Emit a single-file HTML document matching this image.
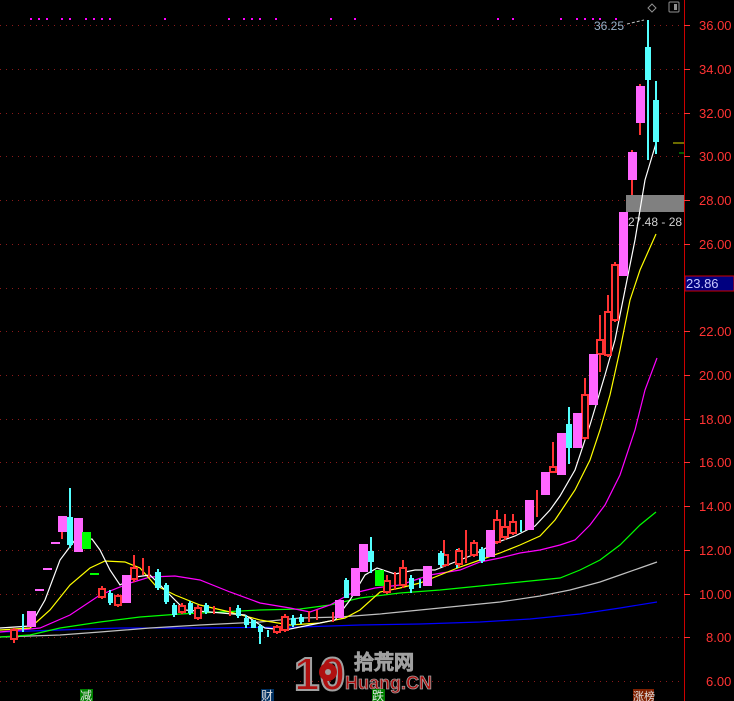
<!DOCTYPE html>
<html><head><meta charset="utf-8"><style>
html,body{margin:0;padding:0;background:#000;width:734px;height:701px;overflow:hidden}
svg{display:block}
text{font-family:"Liberation Sans","Noto Sans CJK SC",sans-serif}
</style></head><body>
<svg width="734" height="701" viewBox="0 0 734 701" xmlns="http://www.w3.org/2000/svg">
<rect width="734" height="701" fill="#000"/>
<g stroke="#8b1a1a" stroke-width="1" stroke-dasharray="1,5">
<line x1="0" y1="25.5" x2="684" y2="25.5"/><line x1="0" y1="69.5" x2="684" y2="69.5"/>
<line x1="0" y1="113.5" x2="684" y2="113.5"/><line x1="0" y1="156.5" x2="684" y2="156.5"/>
<line x1="0" y1="200.5" x2="684" y2="200.5"/><line x1="0" y1="244.5" x2="684" y2="244.5"/>
<line x1="0" y1="288.5" x2="684" y2="288.5"/><line x1="0" y1="331.5" x2="684" y2="331.5"/>
<line x1="0" y1="375.5" x2="684" y2="375.5"/><line x1="0" y1="419.5" x2="684" y2="419.5"/>
<line x1="0" y1="462.5" x2="684" y2="462.5"/><line x1="0" y1="506.5" x2="684" y2="506.5"/>
<line x1="0" y1="550.5" x2="684" y2="550.5"/><line x1="0" y1="594.5" x2="684" y2="594.5"/>
<line x1="0" y1="637.5" x2="684" y2="637.5"/><line x1="0" y1="681.5" x2="684" y2="681.5"/>
</g>
<line x1="684.5" y1="0" x2="684.5" y2="701" stroke="#cc0000" stroke-width="1"/>
<g fill="#ff3333" font-size="13">
<text x="699" y="30">36.00</text><text x="699" y="74">34.00</text><text x="699" y="118">32.00</text>
<text x="699" y="161">30.00</text><text x="699" y="205">28.00</text><text x="699" y="249">26.00</text>
<text x="699" y="336">22.00</text><text x="699" y="380">20.00</text><text x="699" y="424">18.00</text>
<text x="699" y="467">16.00</text><text x="699" y="511">14.00</text><text x="699" y="555">12.00</text>
<text x="699" y="599">10.00</text><text x="706" y="642">8.00</text><text x="706" y="686">6.00</text>
</g>
<g stroke="#ff3333" stroke-width="1"><line x1="684" y1="25.5" x2="690" y2="25.5"/><line x1="684" y1="69.5" x2="690" y2="69.5"/><line x1="684" y1="113.5" x2="690" y2="113.5"/><line x1="684" y1="156.5" x2="690" y2="156.5"/><line x1="684" y1="200.5" x2="690" y2="200.5"/><line x1="684" y1="244.5" x2="690" y2="244.5"/><line x1="684" y1="331.5" x2="690" y2="331.5"/><line x1="684" y1="375.5" x2="690" y2="375.5"/><line x1="684" y1="419.5" x2="690" y2="419.5"/><line x1="684" y1="462.5" x2="690" y2="462.5"/><line x1="684" y1="506.5" x2="690" y2="506.5"/><line x1="684" y1="550.5" x2="690" y2="550.5"/><line x1="684" y1="594.5" x2="690" y2="594.5"/><line x1="684" y1="637.5" x2="690" y2="637.5"/></g>
<rect x="685" y="276" width="49" height="15" fill="#000080" stroke="#cc0000"/>
<text x="686" y="288" fill="#c8c8ff" font-size="13">23.86</text>
<rect x="626" y="195" width="58" height="17" fill="#808080"/>
<text x="628" y="226" fill="#d0d0d0" font-size="12">27.48 - 28</text>
<text x="594" y="30" fill="#9ab0c8" font-size="12">36.25</text>
<line x1="627" y1="24" x2="644" y2="20" stroke="#c0c0c0" stroke-dasharray="3,2"/>
<line x1="673" y1="143" x2="684" y2="143" stroke="#d8d800"/>
<line x1="679" y1="153" x2="684" y2="153" stroke="#00c000"/>
<path d="M652 4l4 4-4 4-4-4z" fill="none" stroke="#909090"/>
<rect x="669" y="2" width="10" height="10" rx="1" fill="none" stroke="#909090"/><rect x="674" y="4" width="3" height="6" fill="#909090"/>
<g fill="#ff00ff">
<rect x="30" y="18" width="2" height="2"/><rect x="38" y="18" width="2" height="2"/><rect x="46" y="18" width="2" height="2"/><rect x="61" y="18" width="2" height="2"/><rect x="69" y="18" width="2" height="2"/><rect x="85" y="18" width="2" height="2"/><rect x="93" y="18" width="2" height="2"/><rect x="101" y="18" width="2" height="2"/><rect x="109" y="18" width="2" height="2"/><rect x="164" y="18" width="2" height="2"/><rect x="228" y="18" width="2" height="2"/><rect x="243" y="18" width="2" height="2"/><rect x="251" y="18" width="2" height="2"/><rect x="259" y="18" width="2" height="2"/><rect x="275" y="18" width="2" height="2"/><rect x="330" y="18" width="2" height="2"/><rect x="354" y="18" width="2" height="2"/><rect x="497" y="18" width="2" height="2"/><rect x="512" y="18" width="2" height="2"/><rect x="560" y="18" width="2" height="2"/><rect x="576" y="18" width="2" height="2"/><rect x="584" y="18" width="2" height="2"/><rect x="592" y="18" width="2" height="2"/><rect x="599" y="18" width="2" height="2"/><rect x="615" y="18" width="2" height="2"/>
</g>
<g fill="none" stroke-width="1.2">
<polyline stroke="#0000ff" points="0,632 60,630 120,628 200,628 300,627 360,625 420,624 480,622 530,619 580,614 620,608 657,602"/>
<polyline stroke="#c0c0c0" points="0,637 60,635 100,632 150,628 200,625 260,622 300,618 340,617 380,614 420,610 460,606 500,602 540,596 570,590 600,582 620,575 640,568 657,562"/>
<polyline stroke="#00ff00" points="0,637 30,635 60,628 100,622 140,617 180,614 220,612 260,610 300,609 330,605 360,598 400,593 440,590 480,586 510,583 540,580 560,578 580,570 600,560 620,545 640,525 656,512"/>
<polyline stroke="#ff00ff" points="0,632 40,628 70,615 100,595 130,583 150,577 175,576 200,580 230,592 260,603 290,608 310,612 330,605 350,594 375,588 400,585 430,575 460,570 480,562 500,558 520,553 540,550 560,545 575,540 590,525 605,505 620,475 635,430 645,390 657,358"/>
<polyline stroke="#ffff00" points="0,630 30,628 50,610 70,585 90,568 105,561 125,562 140,568 155,585 175,595 200,605 230,612 260,620 290,625 320,623 345,618 360,610 380,592 400,588 420,583 440,575 460,567 480,560 500,553 520,545 540,536 555,520 565,505 575,490 590,460 600,430 610,395 620,350 630,300 640,270 656,234"/>
<polyline stroke="#ffffff" points="0,628 30,626 45,600 60,560 75,540 92,539 100,550 110,570 120,585 135,577 150,575 165,590 185,610 210,612 245,615 265,628 285,630 310,625 335,620 350,600 365,575 377,568 395,574 415,570 435,570 455,562 475,554 495,543 515,536 535,526 550,510 560,496 575,470 590,425 605,375 615,340 625,290 635,240 645,180 657,140"/>
</g>
<g stroke-width="2">
<g stroke="#ff3333">
<line x1="14" y1="628" x2="14" y2="643"/><line x1="62" y1="516" x2="62" y2="539"/><line x1="102" y1="586" x2="102" y2="599"/><line x1="118" y1="594" x2="118" y2="607"/><line x1="134" y1="555" x2="134" y2="582"/><line x1="143" y1="558" x2="143" y2="575"/><line x1="149" y1="566" x2="149" y2="577"/><line x1="182" y1="603" x2="182" y2="614"/><line x1="198" y1="605" x2="198" y2="620"/><line x1="214" y1="606" x2="214" y2="614"/><line x1="230" y1="607" x2="230" y2="616"/><line x1="277" y1="625" x2="277" y2="634"/><line x1="285" y1="614" x2="285" y2="632"/><line x1="309" y1="611" x2="309" y2="622"/><line x1="317" y1="610" x2="317" y2="620"/><line x1="333" y1="612" x2="333" y2="622"/><line x1="387" y1="575" x2="387" y2="594"/><line x1="395" y1="572" x2="395" y2="590"/><line x1="403" y1="560" x2="403" y2="588"/><line x1="444" y1="540" x2="444" y2="567"/><line x1="459" y1="548" x2="459" y2="567"/><line x1="466" y1="530" x2="466" y2="563"/><line x1="474" y1="540" x2="474" y2="557"/><line x1="497" y1="510" x2="497" y2="544"/><line x1="505" y1="514" x2="505" y2="540"/><line x1="513" y1="514" x2="513" y2="535"/><line x1="537" y1="490" x2="537" y2="517"/><line x1="553" y1="442" x2="553" y2="473"/><line x1="585" y1="378" x2="585" y2="440"/><line x1="600" y1="315" x2="600" y2="372"/><line x1="608" y1="295" x2="608" y2="357"/><line x1="615" y1="262" x2="615" y2="322"/><line x1="632" y1="150" x2="632" y2="195"/><line x1="640" y1="84" x2="640" y2="135"/>
</g>
<g stroke="#54ffff">
<line x1="23" y1="614" x2="23" y2="632"/><line x1="70" y1="488" x2="70" y2="548"/><line x1="110" y1="590" x2="110" y2="605"/><line x1="158" y1="569" x2="158" y2="590"/><line x1="166" y1="583" x2="166" y2="604"/><line x1="174" y1="603" x2="174" y2="617"/><line x1="190" y1="601" x2="190" y2="615"/><line x1="206" y1="603" x2="206" y2="614"/><line x1="238" y1="605" x2="238" y2="618"/><line x1="246" y1="615" x2="246" y2="628"/><line x1="260" y1="624" x2="260" y2="644"/><line x1="268" y1="630" x2="268" y2="637"/><line x1="293" y1="615" x2="293" y2="627"/><line x1="301" y1="614" x2="301" y2="624"/><line x1="346" y1="578" x2="346" y2="598"/><line x1="371" y1="537" x2="371" y2="573"/><line x1="411" y1="575" x2="411" y2="593"/><line x1="420" y1="579" x2="420" y2="588"/><line x1="441" y1="551" x2="441" y2="567"/><line x1="457" y1="549" x2="457" y2="568"/><line x1="482" y1="547" x2="482" y2="563"/><line x1="521" y1="520" x2="521" y2="532"/><line x1="569" y1="407" x2="569" y2="464"/><line x1="648" y1="20" x2="648" y2="160"/><line x1="656" y1="81" x2="656" y2="154"/>
</g>
</g>
<g fill="#000" stroke="#ff3333" stroke-width="2">
<rect x="11" y="630" width="6" height="9"/><rect x="99" y="589" width="6" height="8"/><rect x="115" y="596" width="6" height="9"/><rect x="131" y="568" width="6" height="11"/><rect x="179" y="606" width="6" height="6"/><rect x="195" y="608" width="6" height="10"/><rect x="274" y="627" width="6" height="5"/><rect x="282" y="617" width="6" height="13"/><rect x="384" y="581" width="6" height="11"/><rect x="400" y="568" width="6" height="17"/><rect x="443" y="555" width="5" height="10"/><rect x="456" y="551" width="6" height="13"/><rect x="471" y="543" width="6" height="12"/><rect x="494" y="520" width="6" height="22"/><rect x="502" y="527" width="6" height="10"/><rect x="510" y="522" width="6" height="11"/><rect x="550" y="467" width="6" height="5"/><rect x="582" y="395" width="6" height="43"/><rect x="597" y="340" width="6" height="14"/><rect x="605" y="312" width="6" height="43"/><rect x="612" y="265" width="6" height="55"/>
</g>
<g fill="#ff66ff">
<rect x="27" y="611" width="9" height="16"/><rect x="58" y="516" width="9" height="16"/><rect x="74" y="518" width="9" height="34"/><rect x="122" y="575" width="9" height="28"/><rect x="335" y="600" width="9" height="18"/><rect x="351" y="568" width="9" height="28"/><rect x="359" y="544" width="9" height="28"/><rect x="423" y="566" width="9" height="20"/><rect x="486" y="530" width="9" height="27"/><rect x="525" y="500" width="9" height="30"/><rect x="541" y="472" width="9" height="23"/><rect x="557" y="433" width="9" height="42"/><rect x="573" y="413" width="9" height="35"/><rect x="589" y="354" width="9" height="51"/><rect x="619" y="212" width="9" height="64"/><rect x="628" y="152" width="9" height="28"/><rect x="636" y="86" width="9" height="37"/>
</g>
<g fill="#54ffff">
<rect x="67" y="517" width="6" height="28"/><rect x="108" y="593" width="5" height="10"/><rect x="155" y="572" width="6" height="16"/><rect x="164" y="585" width="5" height="17"/><rect x="172" y="605" width="5" height="10"/><rect x="188" y="603" width="5" height="10"/><rect x="204" y="605" width="5" height="7"/><rect x="236" y="608" width="5" height="8"/><rect x="244" y="618" width="5" height="7"/><rect x="251" y="620" width="5" height="8"/><rect x="258" y="626" width="5" height="6"/><rect x="291" y="618" width="5" height="7"/><rect x="299" y="617" width="5" height="5"/><rect x="344" y="580" width="5" height="18"/><rect x="368" y="551" width="6" height="11"/><rect x="409" y="578" width="5" height="11"/><rect x="438" y="553" width="6" height="12"/><rect x="479" y="549" width="6" height="12"/><rect x="566" y="424" width="6" height="24"/><rect x="645" y="47" width="6" height="33"/><rect x="653" y="100" width="6" height="42"/>
</g>
<g fill="#00ff00"><rect x="82" y="532" width="9" height="17"/><rect x="375" y="570" width="9" height="16"/></g>
<g stroke="#ff66ff" stroke-width="2"><line x1="51" y1="543" x2="60" y2="543"/><line x1="43" y1="569" x2="52" y2="569"/><line x1="35" y1="590" x2="44" y2="590"/></g>
<line x1="90" y1="574" x2="99" y2="574" stroke="#00ff00" stroke-width="2"/>
<text x="294" y="690" font-size="46" font-weight="bold" fill="#b01010" stroke="#a0a0a0" stroke-width="2">10</text>
<circle cx="328" cy="672" r="9" fill="#b01010"/><circle cx="328" cy="672" r="3" fill="#a0a0a0"/>
<text x="354" y="669" font-size="20" fill="#333" stroke="#a0a0a0" stroke-width="1.5">拾荒网</text>
<text x="345" y="689" font-size="18" font-weight="bold" fill="#b01010" stroke="#a0a0a0" stroke-width="0.8">Huang.CN</text>
<rect x="80" y="689" width="13" height="12" fill="#008000"/><text x="80" y="700" font-size="12" fill="#e0e0e0">减</text>
<rect x="261" y="689" width="13" height="12" fill="#003060"/><text x="261" y="700" font-size="12" fill="#e0e0e0">财</text>
<rect x="372" y="689" width="13" height="12" fill="#008000"/><text x="372" y="700" font-size="12" fill="#e0e0e0">跌</text>
<rect x="633" y="689" width="21" height="12" fill="#802000"/><text x="633" y="700" font-size="11" fill="#e0e0e0">涨榜</text>
</svg>
</body></html>
